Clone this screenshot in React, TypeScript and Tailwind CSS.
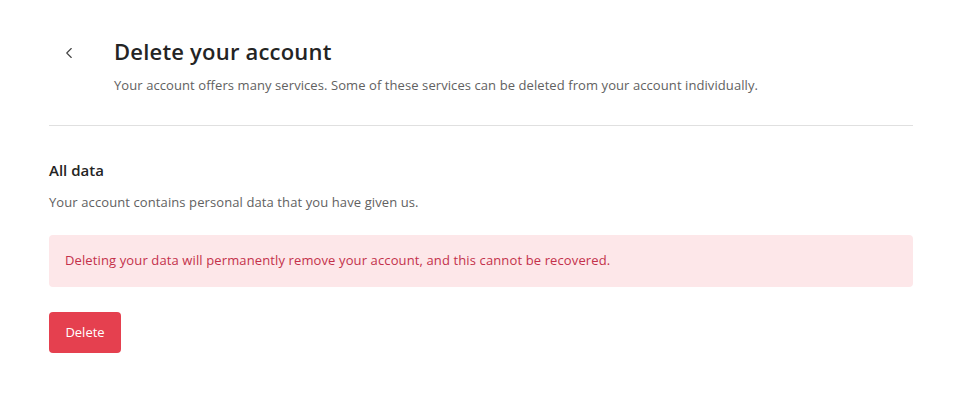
import { ChevronLeft } from 'lucide-react';

export default function App() {
  return (
    <div className="min-h-screen bg-white font-['Open_Sans',sans-serif] text-[#242424]">
      <div className="mx-[49px] w-[864px] pt-[36px]">
        <header className="flex items-start border-b border-[#e0e0e0] pb-[31px]">
          <button className="mt-[8px] ml-[11px] mr-[36px] text-[#424242]">
            <ChevronLeft size={18} strokeWidth={1.5} />
          </button>
          <div className="flex flex-col">
            <h1 className="text-[22px] leading-[30px] font-semibold tracking-[0.2px]">Delete your account</h1>
            <p className="mt-[10px] text-[13px] leading-[18px] tracking-[0.08px] text-[#616161]">
              Your account offers many services. Some of these services can be deleted from your
              account individually.
            </p>
          </div>
        </header>

        <section className="pt-[33px]">
          <h2 className="text-[15px] leading-[22px] font-semibold">All data</h2>
          <p className="mt-[12px] text-[13px] leading-[18px] tracking-[0.1px] text-[#616161]">
            Your account contains personal data that you have given us.
          </p>
          <div className="mt-[24px] flex h-[52px] items-center rounded-[4px] bg-[#fde7e9] px-[16px] text-[13px] tracking-[0.12px] text-[#c4314b]">
            Deleting your data will permanently remove your account, and this cannot be recovered.
          </div>
          <button className="mt-[25px] h-[41px] w-[72px] rounded-[4px] bg-[#e5404f] text-[13px] text-white">
            Delete
          </button>
        </section>
      </div>
    </div>
  );
}
